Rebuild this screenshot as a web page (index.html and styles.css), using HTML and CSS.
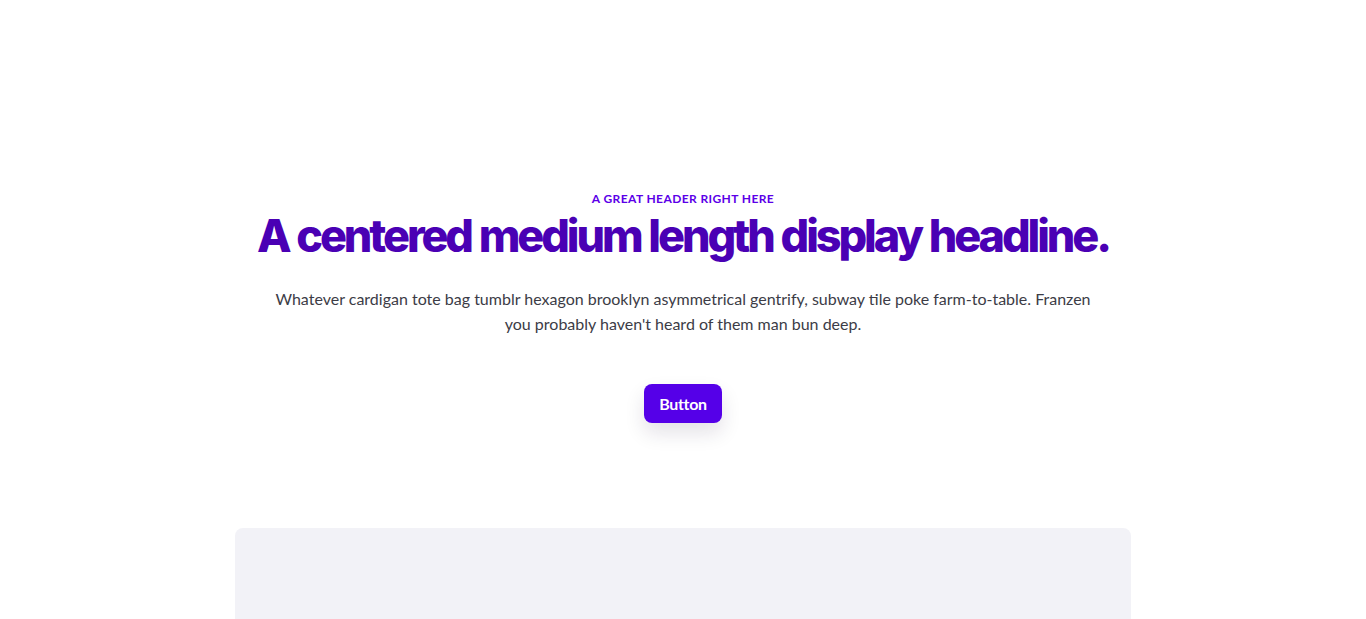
FILE: index.html
```html
<!DOCTYPE html>
<html>
<head>
<meta charset="utf-8">
<link rel="stylesheet" href="styles.css">
</head>
<body>
<section class="hero">
  <p class="eyebrow">A great header right here</p>
  <h1 class="headline">A centered medium length display headline.</h1>
  <p class="lead">Whatever cardigan tote bag tumblr hexagon brooklyn asymmetrical gentrify, subway tile poke farm-to-table. Franzen you probably haven't heard of them man bun deep.</p>
  <a class="btn" href="#">Button</a>
  <div class="media"></div>
</section>
</body>
</html>
```
FILE: styles.css
```css
* { box-sizing: border-box; }
html, body { margin: 0; padding: 0; background: #fff; }
body { font-family: "Lato", "Inter", sans-serif; overflow: hidden; height: 619px; }
.hero {
  display: flex;
  flex-direction: column;
  align-items: center;
  padding-top: 191px;
}
.eyebrow {
  margin: 0;
  font-family: "Lato", sans-serif;
  font-weight: 700;
  font-size: 12px;
  line-height: 16px;
  letter-spacing: 0.4px;
  text-transform: uppercase;
  color: #5b00e8;
}
.headline {
  margin: -1px 0 0;
  font-family: "Inter", sans-serif;
  font-weight: 800;
  font-size: 45px;
  line-height: 60px;
  letter-spacing: -3.1px;
  word-spacing: 1px;
  color: #4a00b4;
}
.lead {
  margin: 20px 0 0;
  max-width: 830px;
  text-align: center;
  font-family: "Lato", sans-serif;
  font-size: 16px;
  line-height: 25px;
  color: #3c3c46;
}
.btn {
  margin-top: 48px;
  display: inline-flex;
  align-items: center;
  justify-content: center;
  width: 78px;
  height: 39px;
  border-radius: 8px;
  background: #5500e8;
  color: #fff;
  text-decoration: none;
  font-family: "Lato", sans-serif;
  font-weight: 700;
  font-size: 16px;
  letter-spacing: -0.3px;
  box-shadow: 0 10px 20px rgba(30, 20, 60, 0.12);
}
.media {
  margin-top: 105px;
  width: 896px;
  height: 200px;
  flex-shrink: 0;
  border-radius: 8px;
  background: #f2f2f7;
}
```
